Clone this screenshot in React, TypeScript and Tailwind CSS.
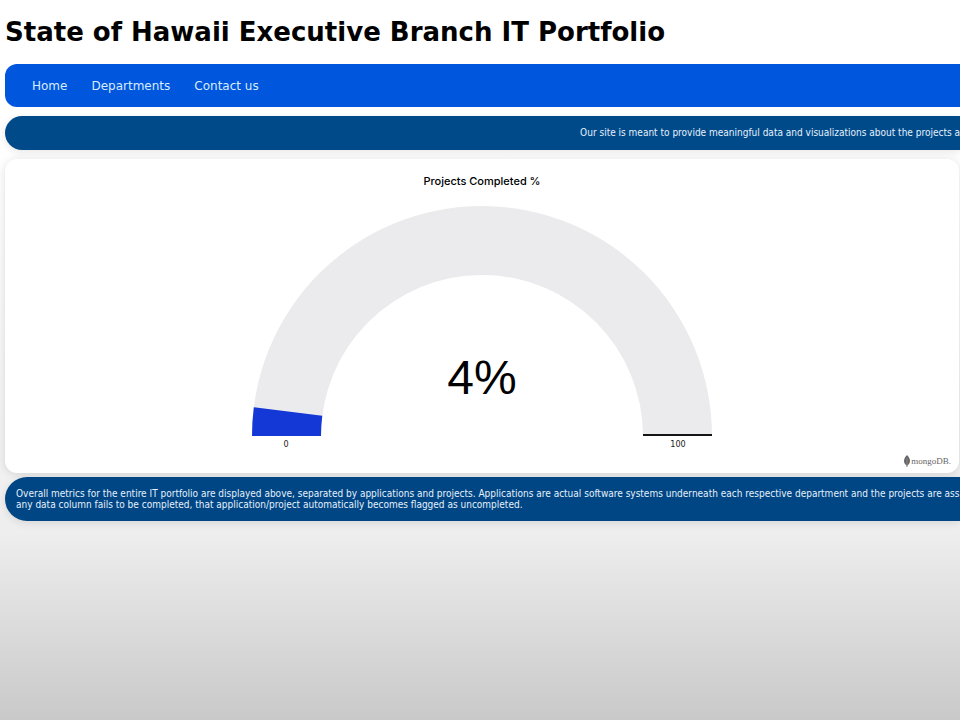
const navItems = ["Home", "Departments", "Contact us"];

const CENTER = 231;
const OUTER = 230;
const INNER = 161;

function arc(from: number, to: number) {
  const point = (radius: number, percent: number) => {
    const angle = Math.PI * (1 - percent / 100);
    return `${CENTER + radius * Math.cos(angle)} ${CENTER - radius * Math.sin(angle)}`;
  };
  return `M${point(OUTER, from)} A${OUTER} ${OUTER} 0 0 1 ${point(OUTER, to)} L${point(INNER, to)} A${INNER} ${INNER} 0 0 0 ${point(INNER, from)} Z`;
}

function Gauge({ value }: { value: number }) {
  return (
    <svg viewBox="0 0 462 246" className="mt-4 h-[246px] w-[462px] max-w-full" role="img" aria-label={`${value}% completed`}>
      <path d={arc(0, 100)} fill="#ebebed" />
      <path d={arc(0, value)} fill="#1338d6" />
      <rect x={CENTER + INNER} y="229" width="69" height="2" fill="#151515" />
      <text x="231" y="189" textAnchor="middle" className="fill-black font-['Liberation_Sans',sans-serif] text-[48px]">
        {value}%
      </text>
      <text x="35" y="242" textAnchor="middle" className="fill-[#222] font-['DejaVu_Sans_Condensed',sans-serif] text-[9px]">
        0
      </text>
      <text x="427" y="242" textAnchor="middle" className="fill-[#222] font-['DejaVu_Sans_Condensed',sans-serif] text-[9px]">
        100
      </text>
    </svg>
  );
}

export default function App() {
  return (
    <div className="min-h-screen overflow-hidden bg-linear-to-b from-white from-20% via-[#eeeeee] via-74% to-[#c9c9c9] pl-[5px] font-['Verdana','DejaVu_Sans',sans-serif]">
      <header>
        <h1 className="pt-3 text-[26px] leading-10 font-bold whitespace-nowrap text-black">
          State of Hawaii Executive Branch IT Portfolio
        </h1>
        <nav className="mt-3 flex h-[43px] items-center gap-6 rounded-l-xl bg-[#0056dc] px-[27px] text-[12px] text-[#d9ecff]">
          {navItems.map((item) => (
            <a key={item} href="#" className="whitespace-nowrap">
              {item}
            </a>
          ))}
        </nav>
      </header>
      <p className="mt-[9px] h-[34px] rounded-l-full bg-[#004a8a] text-right font-['DejaVu_Sans_Condensed','DejaVu_Sans',sans-serif] text-[10px] leading-[34px] whitespace-nowrap text-[#e4f1fb] shadow-[0_2px_8px_#0000001a]">
        Our site is meant to provide meaningful data and visualizations about the projects a
      </p>
      <main className="mt-[9px]">
        <section className="mr-px flex h-[314px] flex-col items-center rounded-xl bg-white pt-[14px] shadow-[0_1px_8px_#0000001f]">
          <h2 className="font-['Inter','Liberation_Sans',sans-serif] text-[11px] leading-4 font-medium text-black">Projects Completed %</h2>
          <Gauge value={4} />
          <a href="#" className="mt-1 mr-2 flex items-center gap-px self-end font-['Liberation_Serif',serif] text-[9px] leading-3 text-[#666]">
            <svg viewBox="0 0 6 12" className="h-3 w-1.5" aria-hidden="true">
              <path d="M3 0C5 2 6 4 6 6c0 2-1 3-2.5 4.5L3.3 12h-.6l-.2-1.5C1 9 0 8 0 6c0-2 1-4 3-6Z" fill="#666" />
              <path d="M3 3v9" stroke="#aaa" strokeWidth=".5" />
            </svg>
            mongoDB.
          </a>
        </section>
        <p className="mt-1 rounded-l-full bg-[#004584] py-[11px] pl-[11px] font-['DejaVu_Sans_Condensed','DejaVu_Sans',sans-serif] text-[10px] leading-[11px] whitespace-nowrap text-[#e4f1fb] shadow-[0_2px_8px_#0000001a]">
          Overall metrics for the entire IT portfolio are displayed above, separated by applications and projects. Applications are actual software systems underneath each respective department and the projects are ass
          <br />
          any data column fails to be completed, that application/project automatically becomes flagged as uncompleted.
        </p>
      </main>
    </div>
  );
}
